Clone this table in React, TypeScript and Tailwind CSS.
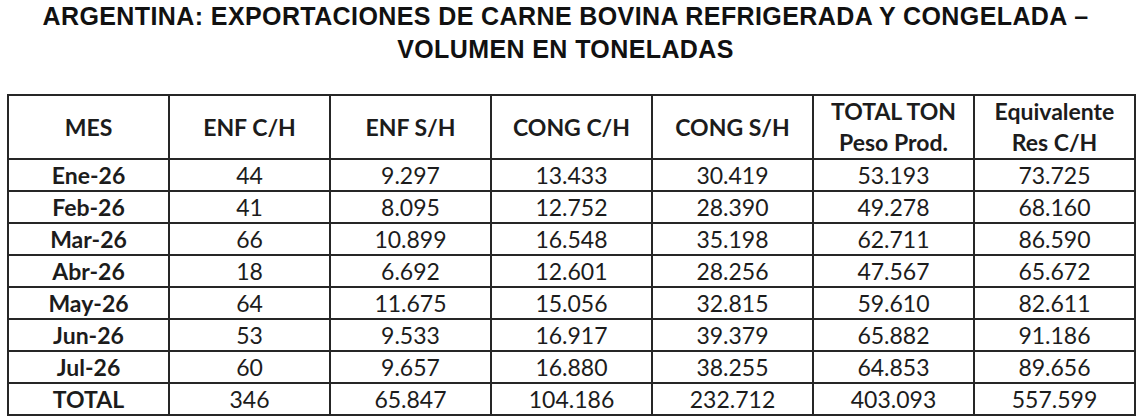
const rows = [
  ['Ene-26', '44', '9.297', '13.433', '30.419', '53.193', '73.725'],
  ['Feb-26', '41', '8.095', '12.752', '28.390', '49.278', '68.160'],
  ['Mar-26', '66', '10.899', '16.548', '35.198', '62.711', '86.590'],
  ['Abr-26', '18', '6.692', '12.601', '28.256', '47.567', '65.672'],
  ['May-26', '64', '11.675', '15.056', '32.815', '59.610', '82.611'],
  ['Jun-26', '53', '9.533', '16.917', '39.379', '65.882', '91.186'],
  ['Jul-26', '60', '9.657', '16.880', '38.255', '64.853', '89.656'],
  ['TOTAL', '346', '65.847', '104.186', '232.712', '403.093', '557.599'],
]

export default function App() {
  return (
    <div className="w-[1143px] h-[418px] bg-white overflow-hidden">
      {/* Title */}
      <div className="pr-[12px] text-center font-['Liberation_Sans',Arial,sans-serif] font-bold text-[25px] leading-[33px] tracking-[0.4px] text-[#111]">
        <div>ARGENTINA: EXPORTACIONES DE CARNE BOVINA REFRIGERADA Y CONGELADA –</div>
        <div>VOLUMEN EN TONELADAS</div>
      </div>

      {/* Table */}
      <table className="mt-[28px] ml-[7px] w-[1129px] table-fixed border-collapse font-['Lato',sans-serif] text-[23px] text-[#1c1c1c]">
        <thead>
          <tr className="h-[62px] font-bold leading-[31px]">
            <th className="border-2 border-[#262626]">MES</th>
            <th className="border-2 border-[#262626]">ENF C/H</th>
            <th className="border-2 border-[#262626]">ENF S/H</th>
            <th className="border-2 border-[#262626]">CONG C/H</th>
            <th className="border-2 border-[#262626]">CONG S/H</th>
            <th className="border-2 border-[#262626]">
              TOTAL TON
              <br />
              Peso Prod.
            </th>
            <th className="border-2 border-[#262626]">
              Equivalente
              <br />
              Res C/H
            </th>
          </tr>
        </thead>
        <tbody>
          {rows.map((r) => (
            <tr key={r[0]} className="h-[32px] leading-[28px]">
              {r.map((c, i) => (
                <td
                  key={i}
                  className={`border-2 border-[#262626] p-0 text-center ${i === 0 ? 'font-bold' : ''}`}
                >
                  {c}
                </td>
              ))}
            </tr>
          ))}
        </tbody>
      </table>
    </div>
  )
}
